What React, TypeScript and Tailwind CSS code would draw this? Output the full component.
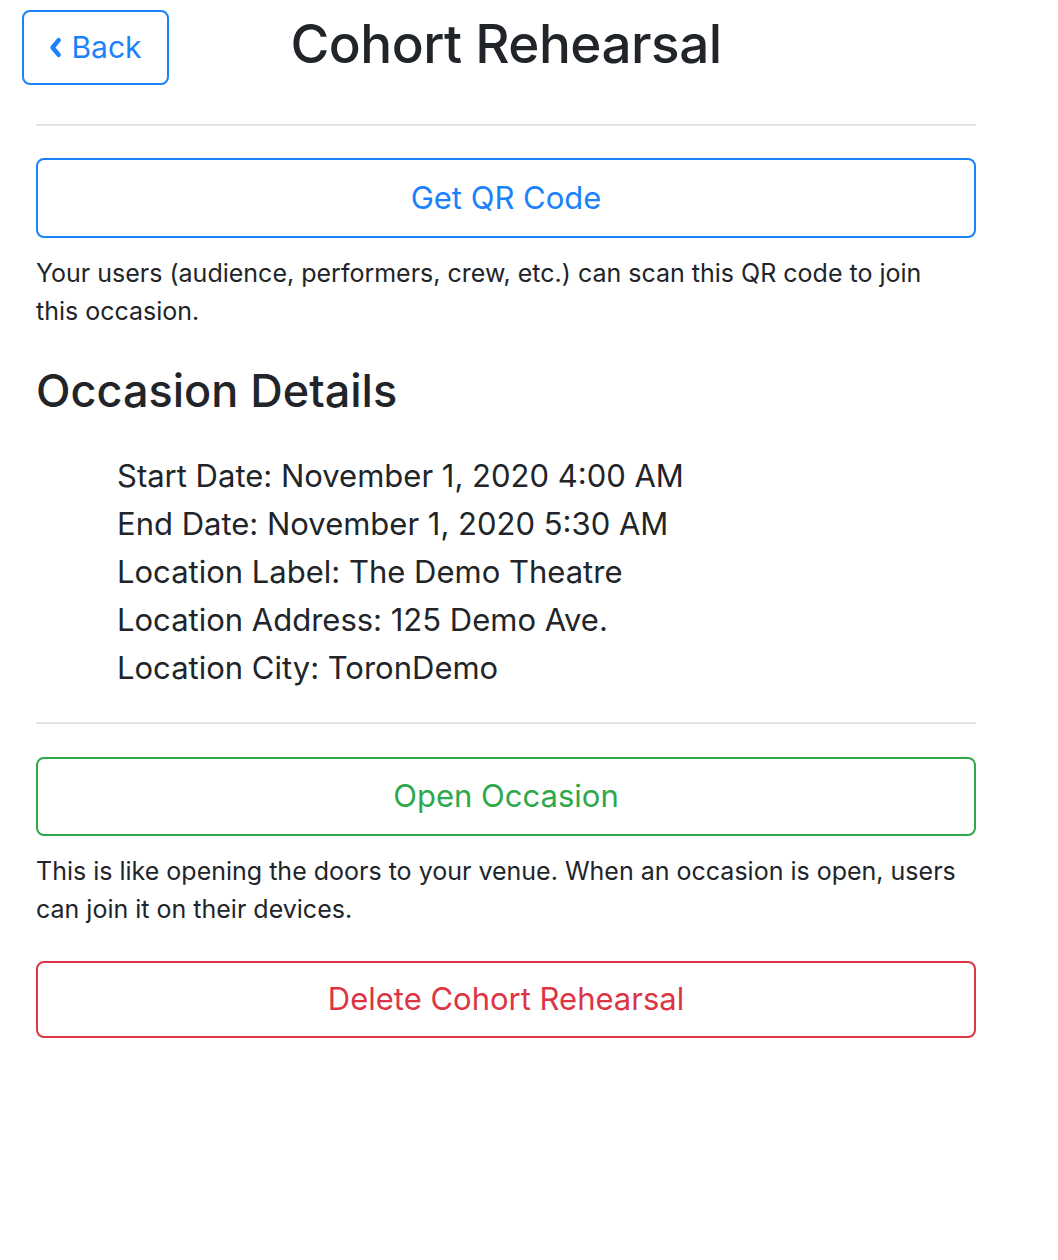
import React from 'react';

const font = { fontFamily: 'Inter, "Noto Sans", sans-serif' };

const ChevronLeft = () => (
  <svg viewBox="0 0 12 20" className="w-[13px] h-[21px]" fill="none">
    <path d="M9 3 L3.2 10 L9 17" stroke="currentColor" strokeWidth="4.2" strokeLinecap="round" strokeLinejoin="round" />
  </svg>
);

export default function App() {
  return (
    <div className="min-h-[1260px] bg-white text-[#212529]" style={font}>
      <div className="ml-[36px] w-[940px]">
        {/* Header */}
        <div className="relative h-[124px] pt-[12px]">
          <button className="absolute left-[-14px] top-[10px] w-[147px] h-[75px] rounded-[8px] border-2 border-[#1a82fb] text-[#1a82fb] flex items-center justify-center gap-[9px] text-[30px]">
            <ChevronLeft />
            <span>Back</span>
          </button>
          <h1 className="text-center text-[53px] leading-[64px] font-medium tracking-[-0.5px]">Cohort Rehearsal</h1>
        </div>
        <div className="h-[2px] bg-[#e4e4e4]" />

        <button className="mt-[32px] w-full h-[80px] rounded-[8px] border-2 border-[#1a82fb] text-[#1a82fb] text-[31px]">
          Get QR Code
        </button>
        <p className="mt-[16px] pr-[12px] text-[25px] leading-[38px]">
          Your users (audience, performers, crew, etc.) can scan this QR code to join this occasion.
        </p>

        <h2 className="mt-[34px] text-[45px] leading-[53px] font-medium">Occasion Details</h2>
        <ul className="mt-[35px] pl-[81px] text-[31px] leading-[48px]">
          <li>Start Date: November 1, 2020 4:00 AM</li>
          <li>End Date: November 1, 2020 5:30 AM</li>
          <li>Location Label: The Demo Theatre</li>
          <li>Location Address: 125 Demo Ave.</li>
          <li>Location City: ToronDemo</li>
        </ul>

        <div className="mt-[30px] h-[2px] bg-[#e4e4e4]" />

        <button className="mt-[33px] w-full h-[79px] rounded-[8px] border-2 border-[#2ea84a] text-[#2ea84a] text-[31px]">
          Open Occasion
        </button>
        <p className="mt-[16px] pr-[12px] text-[25px] leading-[38px]">
          This is like opening the doors to your venue. When an occasion is open, users can join it on their devices.
        </p>

        <button className="mt-[33px] w-full h-[77px] rounded-[8px] border-2 border-[#dc3545] text-[#dc3545] text-[31px]">
          Delete Cohort Rehearsal
        </button>
      </div>
    </div>
  );
}
